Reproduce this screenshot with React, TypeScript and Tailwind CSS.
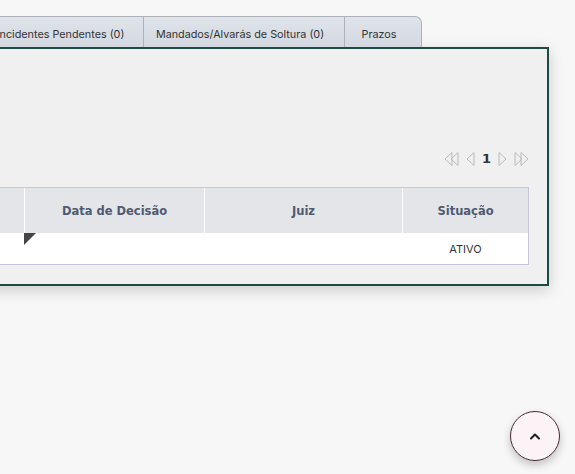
import React from 'react'

const TABS = [
  { label: 'Incidentes Pendentes (0)', w: 'w-[166px]', pad: 'pr-0' },
  { label: 'Mandados/Alvarás de Soltura (0)', w: 'w-[201px]', pad: 'pr-[8px]' },
  { label: 'Prazos', w: 'w-[77px]', pad: 'pr-[8px]', last: true },
]

function Arrow({ dir, double }: { dir: 'l' | 'r'; double?: boolean }) {
  const w = double ? 15 : 9
  const tri = (x: number) =>
    dir === 'l'
      ? `${x + 7.5},0.5 ${x + 0.5},7 ${x + 7.5},13.5`
      : `${x + 0.5},0.5 ${x + 7.5},7 ${x + 0.5},13.5`
  return (
    <svg width={w} height={14} viewBox={`0 0 ${w} 14`} fill="none" stroke="#bababa" strokeWidth="1">
      <polygon points={tri(0.5)} />
      {double && <polygon points={tri(6.5)} />}
    </svg>
  )
}

export default function App() {
  return (
    <div className="relative min-h-screen overflow-hidden bg-[#f7f7f7] font-['Inter',sans-serif] text-[#333]">
      <div className="-ml-[22px] w-[571px] pt-4">
        <div className="flex h-[31px]">
          {TABS.map(t => (
            <div
              key={t.label}
              className={`${t.w} ${t.pad} flex items-center justify-center border border-b-0 border-l-0 border-[#aeb2b8] bg-gradient-to-b from-[#dfe3ea] to-[#d4d9e1] pt-[7px] text-[10.8px] ${t.last ? 'rounded-tr-[7px]' : ''}`}
            >
              {t.label}
            </div>
          ))}
        </div>
        <div className="border-2 border-[#1c4a44] bg-[#f0f0f0] pb-[19px] pr-[18px] pt-[102px] shadow-[0_4px_14px_rgba(0,0,0,0.18)]">
          <div className="flex h-[16px] items-center justify-end gap-[7px]">
            <Arrow dir="l" double />
            <Arrow dir="l" />
            <span className="font-['DejaVu_Sans',sans-serif] text-[13px] font-bold text-[#333]">1</span>
            <Arrow dir="r" />
            <Arrow dir="r" double />
          </div>
          <div className="mt-[20px] border-r border-t border-b border-[#c9c4dd]">
            <div className="grid h-[45px] grid-cols-[1fr_179px_197px_125px] gap-x-px bg-white font-['DejaVu_Sans',sans-serif] text-[11.5px] font-bold text-[#4f5b72]">
              <div className="bg-[#e4e5e8]" />
              <div className="flex items-center justify-center bg-[#e4e5e8] pt-[3px]">Data de Decisão</div>
              <div className="flex items-center justify-center bg-[#e4e5e8] pt-[3px]">Juiz</div>
              <div className="flex items-center justify-center bg-[#e4e5e8] pt-[3px]">Situação</div>
            </div>
            <div className="grid h-[31px] grid-cols-[1fr_179px_197px_125px] gap-x-px bg-white text-[11px]">
              <div />
              <div className="relative">
                <div className="absolute -left-px top-0 h-0 w-0 border-l-[12px] border-b-[12px] border-l-[#444] border-b-transparent" />
              </div>
              <div />
              <div className="flex items-center justify-center pt-[2px]">ATIVO</div>
            </div>
          </div>
        </div>
      </div>
      <button className="absolute left-[510px] top-[411px] flex h-[50px] w-[50px] items-center justify-center rounded-full border border-[#4a2a35] bg-[#fbf3f5] shadow-[0_4px_8px_rgba(0,0,0,0.22)]">
        <svg width="12" height="8" viewBox="0 0 12 8" fill="none" stroke="#2a1a20" strokeWidth="2" strokeLinecap="round" strokeLinejoin="round">
          <polyline points="2,6.5 6,2.5 10,6.5" />
        </svg>
      </button>
    </div>
  )
}
